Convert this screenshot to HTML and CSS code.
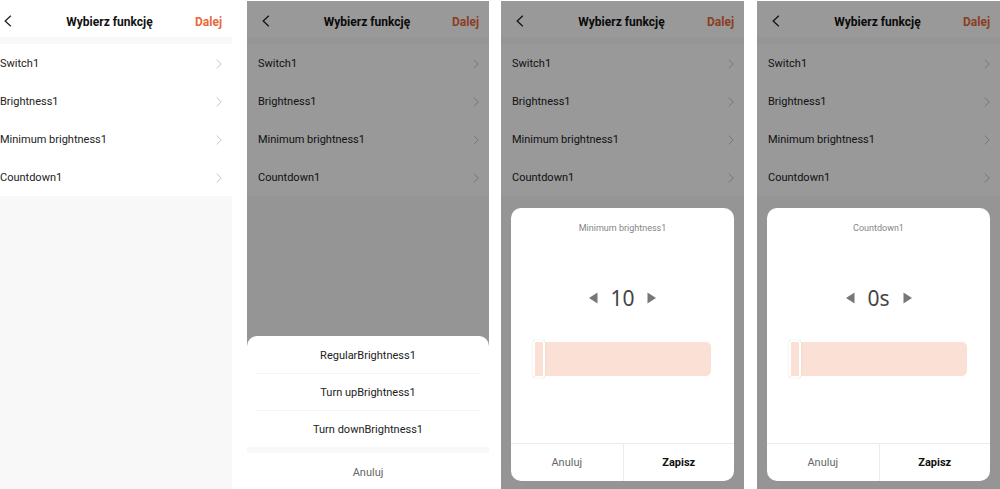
FILE: index.html
```
<!DOCTYPE html>
<html lang="pl">
<head>
<meta charset="utf-8">
<meta name="viewport" content="width=device-width, initial-scale=1">
<title>Wybierz funkcję</title>
<link rel="stylesheet" href="styles.css">
</head>
<body>
<svg class="symbols" aria-hidden="true">
  <symbol id="back" viewBox="0 0 8 12"><path d="M6.8 0.8 1.200 6l5.6 5.2"/></symbol>
  <symbol id="next" viewBox="0 0 6 10"><path d="M0.8 0.6 5.2 5 0.8 9.4"/></symbol>
  <symbol id="less" viewBox="0 0 9 12"><path d="M8.500 0.5v11L0 6z"/></symbol>
  <symbol id="more" viewBox="0 0 9 12"><path d="M0.500 0.5v11L9 6z"/></symbol>
</svg>
<main class="gallery">
  <section class="phone phone-cut">
    <div class="screen">
      <header class="bar">
        <button class="back" aria-label="Wstecz"><svg class="back-icon"><use href="#back"/></svg></button>
        <h1 class="title">Wybierz funkcję</h1>
        <button class="done">Dalej</button>
      </header>
      <nav class="list">
        <a class="row" href="#">Switch1<svg class="next-icon"><use href="#next"/></svg></a>
        <a class="row" href="#">Brightness1<svg class="next-icon"><use href="#next"/></svg></a>
        <a class="row" href="#">Minimum brightness1<svg class="next-icon"><use href="#next"/></svg></a>
        <a class="row" href="#">Countdown1<svg class="next-icon"><use href="#next"/></svg></a>
      </nav>
    </div>
  </section>

  <section class="phone">
    <div class="screen">
      <header class="bar">
        <button class="back" aria-label="Wstecz"><svg class="back-icon"><use href="#back"/></svg></button>
        <h2 class="title">Wybierz funkcję</h2>
        <button class="done">Dalej</button>
      </header>
      <nav class="list">
        <a class="row" href="#">Switch1<svg class="next-icon"><use href="#next"/></svg></a>
        <a class="row" href="#">Brightness1<svg class="next-icon"><use href="#next"/></svg></a>
        <a class="row" href="#">Minimum brightness1<svg class="next-icon"><use href="#next"/></svg></a>
        <a class="row" href="#">Countdown1<svg class="next-icon"><use href="#next"/></svg></a>
      </nav>
    </div>
    <div class="shade"></div>
    <div class="sheet" role="dialog" aria-label="Brightness1">
      <div class="options">
        <button class="option">RegularBrightness1</button>
        <button class="option">Turn upBrightness1</button>
        <button class="option">Turn downBrightness1</button>
      </div>
      <button class="sheet-cancel">Anuluj</button>
    </div>
  </section>

  <section class="phone">
    <div class="screen">
      <header class="bar">
        <button class="back" aria-label="Wstecz"><svg class="back-icon"><use href="#back"/></svg></button>
        <h2 class="title">Wybierz funkcję</h2>
        <button class="done">Dalej</button>
      </header>
      <nav class="list">
        <a class="row" href="#">Switch1<svg class="next-icon"><use href="#next"/></svg></a>
        <a class="row" href="#">Brightness1<svg class="next-icon"><use href="#next"/></svg></a>
        <a class="row" href="#">Minimum brightness1<svg class="next-icon"><use href="#next"/></svg></a>
        <a class="row" href="#">Countdown1<svg class="next-icon"><use href="#next"/></svg></a>
      </nav>
    </div>
    <div class="shade"></div>
    <div class="dialog" role="dialog" aria-labelledby="min-label">
      <label class="dialog-title" id="min-label" for="min-range">Minimum brightness1</label>
      <div class="stepper">
        <button class="step" aria-label="Mniej"><svg class="step-icon"><use href="#less"/></svg></button>
        <output class="value" for="min-range">10</output>
        <button class="step" aria-label="Więcej"><svg class="step-icon"><use href="#more"/></svg></button>
      </div>
      <input class="slider" id="min-range" type="range" min="10" max="1000" value="10">
      <div class="actions">
        <button class="action">Anuluj</button>
        <button class="action action-save">Zapisz</button>
      </div>
    </div>
  </section>

  <section class="phone">
    <div class="screen">
      <header class="bar">
        <button class="back" aria-label="Wstecz"><svg class="back-icon"><use href="#back"/></svg></button>
        <h2 class="title">Wybierz funkcję</h2>
        <button class="done">Dalej</button>
      </header>
      <nav class="list">
        <a class="row" href="#">Switch1<svg class="next-icon"><use href="#next"/></svg></a>
        <a class="row" href="#">Brightness1<svg class="next-icon"><use href="#next"/></svg></a>
        <a class="row" href="#">Minimum brightness1<svg class="next-icon"><use href="#next"/></svg></a>
        <a class="row" href="#">Countdown1<svg class="next-icon"><use href="#next"/></svg></a>
      </nav>
    </div>
    <div class="shade"></div>
    <div class="dialog" role="dialog" aria-labelledby="count-label">
      <label class="dialog-title" id="count-label" for="count-range">Countdown1</label>
      <div class="stepper">
        <button class="step" aria-label="Mniej"><svg class="step-icon"><use href="#less"/></svg></button>
        <output class="value" for="count-range">0s</output>
        <button class="step" aria-label="Więcej"><svg class="step-icon"><use href="#more"/></svg></button>
      </div>
      <input class="slider" id="count-range" type="range" min="0" max="86400" value="0">
      <div class="actions">
        <button class="action">Anuluj</button>
        <button class="action action-save">Zapisz</button>
      </div>
    </div>
  </section>
</main>
</body>
</html>
```
FILE: styles.css
```
* {
  box-sizing: border-box;
}

body {
  margin: 0;
  background: #fff;
  color: #222;
  font-family: Roboto, "Liberation Sans", sans-serif;
  font-size: 11px;
  line-height: 16px;
}

button {
  margin: 0;
  padding: 0;
  border: 0;
  background: none;
  color: inherit;
  font: inherit;
  cursor: pointer;
}

.symbols {
  position: absolute;
  width: 0;
  height: 0;
}

.gallery {
  display: grid;
  grid-template-columns: 235fr 242fr 243fr 244fr;
  gap: 12px;
  min-height: 100vh;
  padding-top: 1px;
}

.phone {
  position: relative;
  display: flex;
  overflow: hidden;
  background: #f8f8f8;
}

.phone-cut {
  margin-right: 3px;
}

.phone:last-child {
  margin-left: 1px;
}

.phone-cut .screen {
  margin-left: -11px;
}

.screen {
  flex: 1;
}

.bar {
  display: grid;
  grid-template-columns: 1fr auto 1fr;
  align-items: center;
  height: 36px;
  padding: 5px 10px 0 8px;
  background: #fff;
}

.back {
  display: flex;
  justify-self: start;
  padding: 3px 7px 5px;
}

.back-icon {
  width: 8px;
  height: 12px;
  fill: none;
  stroke: #222;
  stroke-width: 1.3;
}

.title {
  margin: 0;
  color: #111;
  font-size: 12px;
  font-weight: 700;
}

.done {
  justify-self: end;
  color: #e8683a;
  font-size: 12px;
  font-weight: 700;
}

.list {
  margin-top: 7px;
  background: #fff;
}

.row {
  display: flex;
  align-items: center;
  justify-content: space-between;
  height: 38px;
  padding: 2px 10px 0 11px;
  color: inherit;
  text-decoration: none;
}

.next-icon {
  width: 6px;
  height: 10px;
  margin-bottom: 1px;
  fill: none;
  stroke: #c4c4c4;
}

.shade {
  position: absolute;
  inset: 0;
  background: rgba(0, 0, 0, 0.4);
}

.sheet {
  position: absolute;
  right: 0;
  bottom: 0;
  left: 0;
  border-radius: 10px 10px 0 0;
  background: #fff;
}

.options {
  display: flex;
  flex-direction: column;
  padding: 0 10px;
  border-bottom: 6px solid #f8f8f8;
}

.option {
  height: 37px;
  padding-top: 2px;
}

.option + .option {
  border-top: 1px solid #f4f4f4;
}

.sheet-cancel {
  width: 100%;
  height: 36px;
  padding-top: 4px;
  color: #666;
}

.dialog {
  position: absolute;
  right: 10px;
  bottom: 8px;
  left: 10px;
  display: flex;
  flex-direction: column;
  overflow: hidden;
  border-radius: 10px;
  background: #fff;
}

.dialog-title {
  padding-top: 12px;
  color: #858585;
  font-size: 9px;
  text-align: center;
}

.stepper {
  display: flex;
  align-items: center;
  justify-content: center;
  gap: 12px;
  margin-top: 46px;
}

.step {
  display: flex;
}

.step-icon {
  width: 9px;
  height: 12px;
  fill: #777;
}

.value {
  min-width: 24px;
  color: #444;
  font-family: "Noto Sans", sans-serif;
  font-size: 21px;
  line-height: 32px;
  text-align: center;
}

.slider {
  height: 38px;
  margin: 26px 23px 65px 22px;
  appearance: none;
  background: none;
}

.slider::-webkit-slider-runnable-track {
  height: 34px;
  border-radius: 5px;
  background: #fbe0d6;
}

.slider::-webkit-slider-thumb {
  width: 12px;
  height: 38px;
  margin-top: -2px;
  appearance: none;
  border: 2px solid #fff;
  border-radius: 3px;
  background: #fbe0d6;
  box-shadow: 0 0 1px #b8a9a2;
}

.actions {
  display: grid;
  grid-template-columns: 1fr 1fr;
  border-top: 1px solid #ececec;
}

.action {
  height: 37px;
  padding-top: 1px;
  color: #666;
}

.action-save {
  border-left: 1px solid #ececec;
  color: #111;
  font-weight: 700;
}
```
